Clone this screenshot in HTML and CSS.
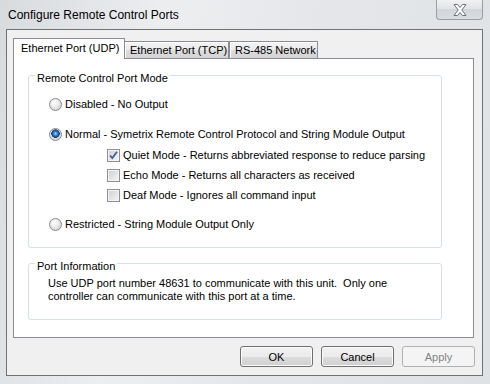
FILE: index.html
```html
<!DOCTYPE html>
<html>
	<head>
		<meta charset="utf-8" />
		<title>Configure Remote Control Ports</title>
		<link rel="stylesheet" href="styles.css">
	</head>
	<body>
		<div class="window">
			<div class="titlebar">
				<span class="title">Configure Remote Control Ports</span>
				<span class="close">
					<svg width="16" height="14" viewBox="0 0 16 14">
						<path d="M2 1.5h3.5l2.5 3 2.5-3H14l-4.2 5.5L14 12.5h-3.5L8 9.5l-2.5 3H2l4.2-5.5z" fill="#fff" stroke="#6b7078" stroke-width="1" stroke-linejoin="round"/>
					</svg>
				</span>
			</div>
			<div class="client">
				<div class="tabs">
					<div class="tab active">Ethernet Port (UDP)</div>
					<div class="tab tcp">Ethernet Port (TCP)</div>
					<div class="tab rs">RS-485 Network</div>
				</div>
				<div class="panel">
					<fieldset class="group mode">
						<legend>Remote Control Port Mode</legend>
						<label class="opt first"><span class="radio"></span>Disabled - No Output</label>
						<label class="opt second"><span class="radio on"></span>Normal - Symetrix Remote Control Protocol and String Module Output</label>
						<label class="opt sub quiet"><span class="check on">
							<svg width="11" height="11" viewBox="0 0 11 11"><path d="M2 5.5l2.3 2.6L9 1.8" fill="none" stroke="#4a5f8f" stroke-width="1.8"/></svg>
						</span>Quiet Mode - Returns abbreviated response to reduce parsing</label>
						<label class="opt sub"><span class="check"></span>Echo Mode - Returns all characters as received</label>
						<label class="opt sub"><span class="check"></span>Deaf Mode - Ignores all command input</label>
						<label class="opt last"><span class="radio"></span>Restricted - String Module Output Only</label>
					</fieldset>
					<fieldset class="group info">
						<legend>Port Information</legend>
						<p class="note">Use UDP port number 48631 to communicate with this unit.&nbsp; Only one<br>controller can communicate with this port at a time.</p>
					</fieldset>
				</div>
				<div class="buttons">
					<button class="btn">OK</button>
					<button class="btn">Cancel</button>
					<button class="btn off">Apply</button>
				</div>
			</div>
		</div>
	</body>
</html>
```

FILE: styles.css
```css
body
{
	margin: 0;
	font-family: "Liberation Sans", Arial, sans-serif;
	font-size: 11px;
	color: #000;
}
.window
{
	width: 490px;
	height: 384px;
	background: linear-gradient(100deg, #d8dbde 0%, #eceef0 30%, #e4e6e9 60%, #dfe2e5 100%);
	overflow: hidden;
}
.titlebar
{
	display: flex;
	align-items: flex-start;
	height: 29px;
}
.title
{
	padding-left: 8px;
	line-height: 30px;
	font-size: 12px;
}
.close
{
	margin-left: auto;
	margin-right: 7px;
	width: 47px;
	height: 20px;
	box-sizing: border-box;
	border: 1px solid #9a9fa6;
	border-top: none;
	border-radius: 0 0 4px 4px;
	background: linear-gradient(#f1f2f4, #dfe2e6 50%, #d2d6db 50%, #d9dde2);
	display: flex;
	align-items: center;
	justify-content: center;
}
.client
{
	margin: 0 7px 0 6px;
	height: 347px;
	box-sizing: border-box;
	border: 1px solid #6f7378;
	background: #f0f0f0;
	padding: 8px 0 0 6px;
}
.tabs
{
	display: flex;
	align-items: flex-end;
	height: 20px;
}
.tab
{
	height: 17px;
	box-sizing: border-box;
	padding-left: 5px;
	line-height: 16px;
	white-space: nowrap;
	border: 1px solid #898c95;
	border-bottom: none;
	background: linear-gradient(#f3f3f3, #ebebeb 50%, #dedede 50%, #d3d3d3);
	box-shadow: inset 1px 1px 0 #fff;
}
.tab.active
{
	width: 112px;
	height: 21px;
	margin: 0 -1px -1px 0;
	padding-left: 7px;
	line-height: 18px;
	background: #fff;
	box-shadow: none;
	position: relative;
	z-index: 1;
}
.tab.tcp
{
	width: 105px;
}
.tab.rs
{
	width: 89px;
}
.panel
{
	width: 461px;
	height: 280px;
	box-sizing: border-box;
	border: 1px solid #898c95;
	background: #fff;
	padding: 6px 0 0 14px;
}
.group
{
	width: 414px;
	box-sizing: border-box;
	margin: 0;
	padding: 0;
	border: 1px solid #d5dfe5;
	border-radius: 3px;
}
/* caption sits a little below the frame line, as in the native group box */
.group legend
{
	margin-left: 6px;
	padding: 6px 2px 0;
	line-height: 15px;
}
.mode
{
	padding-bottom: 13px;
}
.opt
{
	display: flex;
	align-items: center;
	gap: 3px;
	height: 20px;
	padding-left: 20px;
	white-space: nowrap;
}
.opt.first
{
	margin-top: 8px;
}
.opt.second
{
	margin-top: 10px;
}
.opt.sub
{
	padding-left: 78px;
}
.opt.quiet
{
	margin-top: 1px;
}
.opt.last
{
	margin-top: 9px;
}
.radio
{
	width: 13px;
	height: 13px;
	box-sizing: border-box;
	border-radius: 50%;
	border: 1px solid #8a8a8a;
	background: radial-gradient(circle at 40% 35%, #ffffff 0, #e8e8e8 45%, #c4c4c4 100%);
	flex: none;
}
.radio.on
{
	background: radial-gradient(circle at 50% 42%, #a8e4ff 0, #3f98dc 1.5px, #124a95 3.5px, #1a3f78 4px, transparent 4.5px),
		radial-gradient(circle at 40% 35%, #ffffff 0, #e8e8e8 45%, #c4c4c4 100%);
}
.check
{
	width: 13px;
	height: 13px;
	box-sizing: border-box;
	border: 1px solid #8e8f8f;
	background: linear-gradient(135deg, #cbcfd5, #f6f6f6);
	box-shadow: inset 0 0 0 1px #f4f4f4;
	flex: none;
	display: flex;
	align-items: center;
	justify-content: center;
}
.info
{
	margin-top: 5px;
}
.note
{
	margin: 3px 0 16px 19px;
	line-height: 13px;
	white-space: nowrap;
}
.buttons
{
	display: flex;
	justify-content: flex-end;
	gap: 8px;
	margin-top: 8px;
	padding-right: 7px;
}
.btn
{
	width: 73px;
	height: 21px;
	border: 1px solid #707070;
	border-radius: 3px;
	background: linear-gradient(#f2f2f2, #ebebeb 50%, #dddddd 50%, #cfcfcf);
	box-shadow: inset 0 0 0 1px #fbfbfb;
	font-family: inherit;
	font-size: 11px;
	color: #000;
	padding: 0;
}
.btn.off
{
	border-color: #adb2b5;
	background: #f4f4f4;
	box-shadow: none;
	color: #838383;
}
```
